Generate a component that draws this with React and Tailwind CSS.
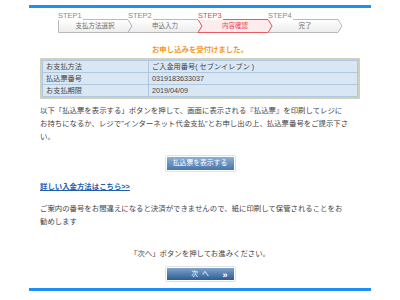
import React from 'react';

const steps = [
    {label: 'STEP1', text: '支払方法選択', first: true},
    {label: 'STEP2', text: '申込入力'},
    {label: 'STEP3', text: '内容確認', active: true},
    {label: 'STEP4', text: '完了'},
];

function Step({step}) {
    const w = 70;
    const h = 14;
    const d = 4;
    const points = step.first
        ? `0.5,0.5 ${w},0.5 ${w + d},${h / 2} ${w},${h - 0.5} 0.5,${h - 0.5}`
        : `0,0.5 ${w},0.5 ${w + d},${h / 2} ${w},${h - 0.5} 0,${h - 0.5} ${d},${h / 2}`;
    return (
        <div className="w-[70px] flex flex-col">
            <div className={`h-[7px] text-[7.5px] leading-[8px] ${step.active ? 'text-[#e8464f]' : 'text-[#8a8a8a]'}`}>
                <span className="bg-white pr-[1px] relative z-20">{step.label}</span>
            </div>
            <div className={`relative h-[14px] flex items-center justify-center text-[6.5px] ${step.active ? 'text-[#e8464f] z-10' : 'text-[#707070]'}`}>
                <svg className="absolute left-0 top-0 overflow-visible" width={w} height={h}>
                    <defs>
                        <linearGradient id="stepg" x1="0" y1="0" x2="0" y2="1">
                            <stop offset="0" stopColor="#ffffff"/>
                            <stop offset="1" stopColor="#ececec"/>
                        </linearGradient>
                    </defs>
                    <polygon
                        points={points}
                        fill={step.active ? '#fdecee' : 'url(#stepg)'}
                        stroke={step.active ? '#ea5a62' : '#b9b9b9'}
                        strokeWidth="1"
                    />
                </svg>
                <span className="relative pl-[4px]">{step.text}</span>
            </div>
        </div>
    );
}

function App() {
    const rows = [
        ['お支払方法', 'ご入金用番号( セブンイレブン )'],
        ['払込票番号', '0319183633037'],
        ['お支払期限', '2019/04/09'],
    ];
    return (
        <div
            className="w-[400px] h-[300px] bg-white overflow-hidden text-[#333]"
            style={{fontFamily: '"Liberation Sans", "Noto Sans CJK JP", sans-serif'}}
        >
            <div className="mx-[29px] mt-[5px] h-[3px] bg-[#1f8ef5]"></div>

            {/* step bar */}
            <div className="ml-[58px] mt-[4px] flex">
                {steps.map((s, i) => (
                    <Step key={i} step={s}/>
                ))}
            </div>

            <div className="mt-[12px] text-center text-[7.4px] font-bold text-[#f39a1c] leading-[10px]">
                お申し込みを受付けました。
            </div>

            <div className="mx-[40px] mt-[3px] border-2 border-[#d3cfbd]">
                <table className="w-full border-collapse text-[7.2px] text-[#444]">
                    <tbody>
                    {rows.map((r, i) => (
                        <tr key={i} className="h-[12px]">
                            <td className="w-[106px] p-0 bg-[#d9e7f5] border border-[#aec8e0] pl-[3px] leading-[10px]">{r[0]}</td>
                            <td className="p-0 bg-[#d9e7f5] border border-[#aec8e0] pl-[3px] leading-[10px]">{r[1]}</td>
                        </tr>
                    ))}
                    </tbody>
                </table>
            </div>

            <p className="mx-[40px] mt-[5px] text-[7.4px] leading-[13px] text-[#444]">
                以下「払込票を表示する」ボタンを押して、画面に表示される『払込票』を印刷してレジに<br/>
                お持ちになるか、レジで"インターネット代金支払"とお申し出の上、払込票番号をご提示下さ<br/>
                い。
            </p>

            <div className="mt-[12px] flex justify-center">
                <button className="w-[71px] h-[17px] p-[1px] rounded-[2px] border border-[#e2e2e2] bg-white">
                    <div className="h-full bg-gradient-to-b from-[#8db0d6] to-[#4676ad] flex items-center justify-center text-white text-[6.8px] leading-none">
                        払込票を表示する
                    </div>
                </button>
            </div>

            <div className="mx-[40px] mt-[10px] text-[7.4px] leading-[10px]">
                <a className="font-bold text-[#1f5fae] underline">詳しい入金方法はこちら&gt;&gt;</a>
            </div>

            <p className="mx-[40px] mt-[10px] text-[7.4px] leading-[13px] text-[#444]">
                ご案内の番号をお間違えになると決済ができませんので、紙に印刷して保管されることをお<br/>
                勧めします
            </p>

            <p className="mt-[21px] text-center text-[7.4px] leading-[10px] text-[#444]">
                「次へ」ボタンを押してお進みください。
            </p>

            <div className="mt-[7px] flex justify-center">
                <button className="w-[71px] h-[16px] p-[1px] rounded-[2px] border border-[#e2e2e2] bg-white">
                    <div className="relative h-full bg-gradient-to-b from-[#7ea3cb] to-[#2d5d94] flex items-center justify-center text-white text-[6.8px] leading-none">
                        <span className="tracking-[4px] pl-[4px]">次へ</span>
                        <span className="absolute right-[6px] top-[3px] text-[9px] leading-[8px] font-bold">»</span>
                    </div>
                </button>
            </div>

            <div className="mx-[29px] mt-[6px] h-[3px] bg-[#1f8ef5]"></div>
        </div>
    );
}

export default App;
